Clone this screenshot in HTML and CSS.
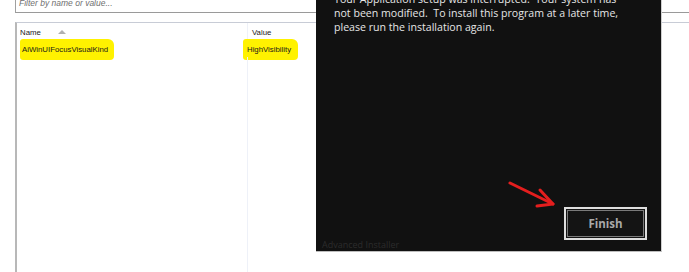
FILE: index.html
```html
<!DOCTYPE html>
<html lang="en">
<head>
    <meta charset="UTF-8">
    <title>Interrupted setup</title>
    <link rel="stylesheet" href="styles.css">
</head>
<body>
    <div class="editor">
        <div class="filter">Filter by name or value...</div>

        <div class="list">
            <div class="list-head">
                <div class="col col-name">Name <span class="sort-up"></span></div>
                <div class="col col-value">Value</div>
            </div>
            <div class="list-row">
                <div class="col col-name"><span class="mark mark-name">AiWinUIFocusVisualKind</span></div>
                <div class="col col-value"><span class="mark mark-value">HighVisibility</span></div>
            </div>
            <div class="list-fill">
                <div class="col col-name"></div>
                <div class="col col-value"></div>
            </div>
        </div>
    </div>

    <div class="dialog">
        <div class="dialog-text">
            <p>Your Application setup was interrupted.&nbsp; Your system has</p>
            <p>not been modified.&nbsp; To install this program at a later time,</p>
            <p>please run the installation again.</p>
        </div>
        <div class="dialog-buttons">
            <button class="btn-finish">Finish</button>
        </div>
        <div class="dialog-brand">Advanced Installer</div>
    </div>

    <svg class="arrow" width="60" height="36" viewBox="0 0 60 36">
        <path d="M4 4 L47 25" />
        <path d="M34 11 L47 25 L31 27" />
    </svg>
</body>
</html>
```

FILE: styles.css
```css
body {
    margin: 0;
    padding: 0;
    background: #ffffff;
    font-family: 'Liberation Sans', Arial, sans-serif;
    width: 689px;
    height: 272px;
    overflow: hidden;
    position: relative;
}

.editor {
    display: flex;
    flex-direction: column;
    height: 272px;
    padding-left: 15px;
    box-sizing: border-box;
}

.filter {
    height: 13px;
    border-left: 1px solid #a0a0a0;
    border-bottom: 1px solid #9a9a9a;
    box-sizing: border-box;
    font-size: 8.5px;
    font-style: italic;
    color: #6f6f6f;
    padding-left: 3px;
    line-height: 6px;
}

.list {
    margin-top: 9px;
    flex: 1;
    display: flex;
    flex-direction: column;
    border-left: 2px solid #b8b8b8;
    border-top: 1px solid #c8ccd6;
    font-size: 7.8px;
    color: #1a1a1a;
}

.list-head,
.list-row,
.list-fill {
    display: flex;
}

.list-head {
    height: 18px;
    align-items: flex-end;
}

.list-row {
    height: 16px;
    align-items: center;
}

.list-fill {
    flex: 1;
}

.col-name {
    width: 231px;
    padding-left: 3px;
    box-sizing: border-box;
    border-right: 1px solid #eef1f8;
}

.list-head .col,
.list-row .col {
    height: 100%;
    display: flex;
    align-items: center;
}

.list-head .col-value,
.list-row .col-value {
    padding-left: 4px;
}

.sort-up {
    display: inline-block;
    width: 0;
    height: 0;
    margin-left: 17px;
    border-left: 4px solid transparent;
    border-right: 4px solid transparent;
    border-bottom: 4px solid #b0b0b0;
}

.mark {
    background: #fff200;
    padding: 6px 6px 6px 2px;
    border-radius: 3px 6px 4px 3px;
}

.mark-value {
    margin-left: -9px;
    padding-left: 4px;
    padding-right: 7px;
}

.dialog {
    position: absolute;
    left: 316px;
    top: 0;
    width: 346px;
    height: 252px;
    background: #111111;
    border-right: 1px solid #cfcfcf;
    border-bottom: 1px solid #bdbdbd;
    box-sizing: border-box;
    display: flex;
    flex-direction: column;
    font-family: 'Open Sans', 'Noto Sans', sans-serif;
}

.dialog-text {
    margin-top: -8px;
    padding-left: 18px;
    color: #e6e6e6;
    font-size: 10.6px;
    line-height: 14px;
}

.dialog-text p {
    margin: 0;
}

.dialog-buttons {
    margin-top: auto;
    display: flex;
    justify-content: flex-end;
    padding-right: 14px;
}

.btn-finish {
    width: 83px;
    height: 33px;
    background: #141414;
    border: 2px solid #dedede;
    box-shadow: inset 0 0 0 1px #141414, inset 0 0 0 2px #7a7a7a;
    color: #a9a9a9;
    font-family: 'Open Sans', 'Noto Sans', sans-serif;
    font-weight: bold;
    font-size: 11.5px;
    padding: 0;
}

.dialog-brand {
    padding: 0 0 1px 6px;
    height: 10px;
    font-size: 9px;
    line-height: 10px;
    color: #2c2c2c;
}

.arrow {
    position: absolute;
    left: 506px;
    top: 179px;
}

.arrow path {
    fill: none;
    stroke: #e41e1e;
    stroke-width: 3;
    stroke-linecap: round;
    stroke-linejoin: round;
}
```
